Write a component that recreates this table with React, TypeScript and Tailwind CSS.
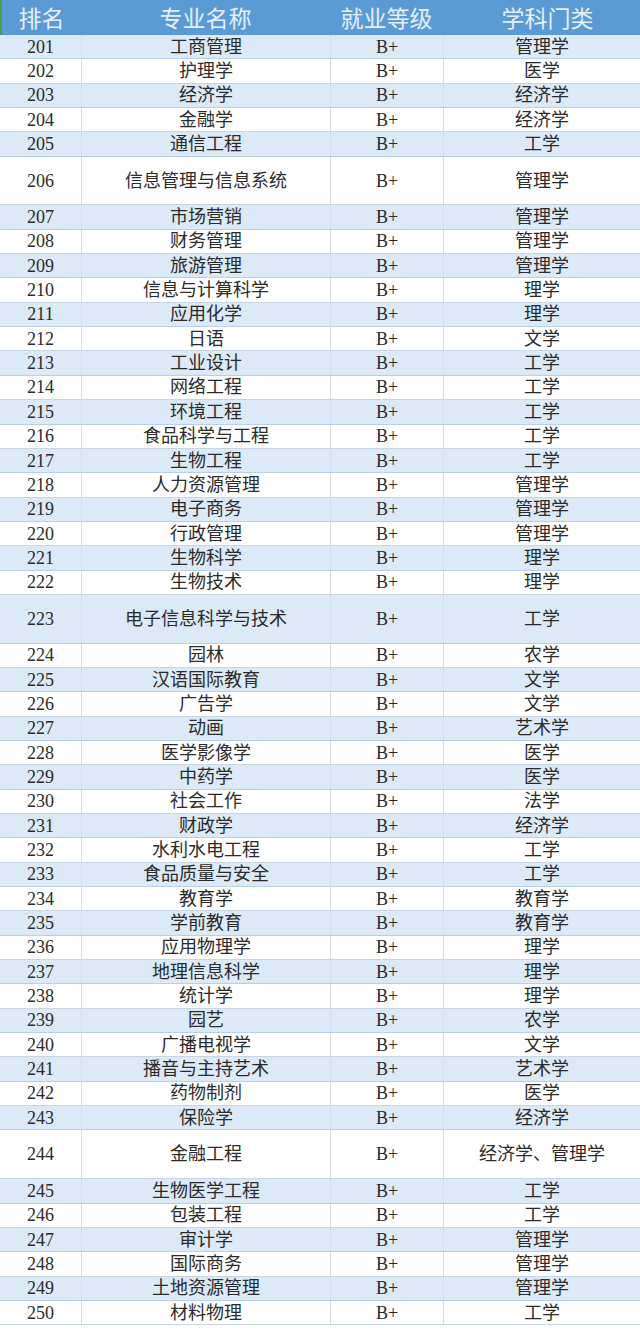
const rows: [number, string, string, boolean?][] = [
  [201, "工商管理", "管理学"],
  [202, "护理学", "医学"],
  [203, "经济学", "经济学"],
  [204, "金融学", "经济学"],
  [205, "通信工程", "工学"],
  [206, "信息管理与信息系统", "管理学", true],
  [207, "市场营销", "管理学"],
  [208, "财务管理", "管理学"],
  [209, "旅游管理", "管理学"],
  [210, "信息与计算科学", "理学"],
  [211, "应用化学", "理学"],
  [212, "日语", "文学"],
  [213, "工业设计", "工学"],
  [214, "网络工程", "工学"],
  [215, "环境工程", "工学"],
  [216, "食品科学与工程", "工学"],
  [217, "生物工程", "工学"],
  [218, "人力资源管理", "管理学"],
  [219, "电子商务", "管理学"],
  [220, "行政管理", "管理学"],
  [221, "生物科学", "理学"],
  [222, "生物技术", "理学"],
  [223, "电子信息科学与技术", "工学", true],
  [224, "园林", "农学"],
  [225, "汉语国际教育", "文学"],
  [226, "广告学", "文学"],
  [227, "动画", "艺术学"],
  [228, "医学影像学", "医学"],
  [229, "中药学", "医学"],
  [230, "社会工作", "法学"],
  [231, "财政学", "经济学"],
  [232, "水利水电工程", "工学"],
  [233, "食品质量与安全", "工学"],
  [234, "教育学", "教育学"],
  [235, "学前教育", "教育学"],
  [236, "应用物理学", "理学"],
  [237, "地理信息科学", "理学"],
  [238, "统计学", "理学"],
  [239, "园艺", "农学"],
  [240, "广播电视学", "文学"],
  [241, "播音与主持艺术", "艺术学"],
  [242, "药物制剂", "医学"],
  [243, "保险学", "经济学"],
  [244, "金融工程", "经济学、管理学", true],
  [245, "生物医学工程", "工学"],
  [246, "包装工程", "工学"],
  [247, "审计学", "管理学"],
  [248, "国际商务", "管理学"],
  [249, "土地资源管理", "管理学"],
  [250, "材料物理", "工学"],
];

const serif = { fontFamily: '"Liberation Serif", "Noto Sans CJK SC", serif' };

export default function App() {
  return (
    <div className="w-[640px] min-h-[1331px] bg-white">
      <div
        className="flex h-[35px] items-center bg-[#5b9bd5] border-l-2 border-[#3fa150] text-[23px] text-[#e6eff9]"
        style={{ fontFamily: '"Noto Sans CJK SC", sans-serif' }}
      >
        <div className="w-[79px] text-center leading-none">排名</div>
        <div className="w-[249px] text-center leading-none">专业名称</div>
        <div className="w-[113px] text-center leading-none">就业等级</div>
        <div className="flex-1 pl-[12px] text-center leading-none">学科门类</div>
      </div>
      {rows.map(([rank, name, cat, tall]) => {
        const blue = rank % 2 === 1;
        const line = blue ? "border-[#d0e0f0]" : "border-[#dadada]";
        return (
          <div
            key={rank}
            className={`flex items-stretch border-b text-[18px] text-[#2b2b2b] ${
              tall ? "h-[48.7px]" : "h-[24.35px]"
            } ${blue ? "bg-[#dce9f6] border-[#b9d0e8]" : "bg-white border-[#c8d6e4]"}`}
            style={serif}
          >
            <div className="w-[81px] flex items-center justify-center pt-[1px]">{rank}</div>
            <div className={`w-[249px] flex items-center justify-center pt-[1px] border-l ${line}`}>
              {name}
            </div>
            <div className={`w-[113px] flex items-center justify-center pt-[1px] border-l ${line}`}>
              B+
            </div>
            <div className={`flex-1 flex items-center justify-center pt-[1px] border-l ${line}`}>
              {cat}
            </div>
          </div>
        );
      })}
    </div>
  );
}
